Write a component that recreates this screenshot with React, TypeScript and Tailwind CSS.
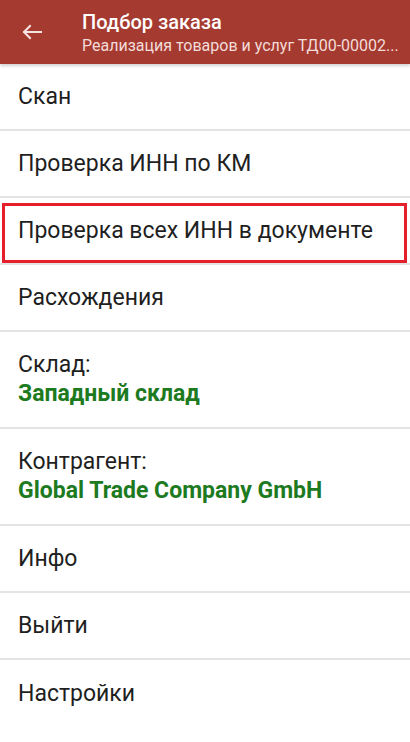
import React from 'react';

type Row = {
  label: string;
  value?: string;
  highlighted?: boolean;
};

const rows: Row[] = [
  { label: 'Скан' },
  { label: 'Проверка ИНН по КМ' },
  { label: 'Проверка всех ИНН в документе', highlighted: true },
  { label: 'Расхождения' },
  { label: 'Склад:', value: 'Западный склад' },
  { label: 'Контрагент:', value: 'Global Trade Company GmbH' },
  { label: 'Инфо' },
  { label: 'Выйти' },
  { label: 'Настройки' },
];

const App: React.FC = () => {
  return (
    <div
      className="w-[410px] h-[742px] bg-white overflow-hidden flex flex-col"
      style={{ fontFamily: 'Roboto, "Noto Sans", sans-serif' }}
    >
      {/* App bar */}
      <header className="h-[64px] shrink-0 bg-[#a53a30] flex items-center shadow-[0_2px_3px_rgba(0,0,0,0.18)] relative z-10">
        <div className="w-[62px] h-full flex items-center justify-center pl-[2px]">
          <svg width="22" height="16" viewBox="0 0 22 16" fill="none">
            <path
              d="M20 8H3M9 2L3 8L9 14"
              stroke="#f6e4e2"
              strokeWidth="2"
              strokeLinecap="square"
            />
          </svg>
        </div>
        <div className="flex flex-col min-w-0 pl-[20px] pr-[10px]">
          <span className="text-white text-[20px] leading-[26px] font-medium">Подбор заказа</span>
          <span className="text-[#f3dcd9] text-[16px] leading-[21px] whitespace-nowrap truncate">
            Реализация товаров и услуг ТД00-00002...
          </span>
        </div>
      </header>

      {/* Menu */}
      <div className="flex flex-col">
        {rows.map((row, idx) => (
          <div
            key={idx}
            className={
              (row.value
                ? 'relative h-[97px] px-[18px] flex flex-col justify-center'
                : 'relative h-[67px] px-[18px] flex items-center') +
              (idx < rows.length - 1 ? ' border-b-2 border-[#e4e4e4]' : '')
            }
          >
            <span className="text-[23px] leading-[29px] text-[#1f1f1f]">{row.label}</span>
            {row.value && (
              <span className="text-[23px] leading-[30px] font-bold text-[#1d7a1f]">{row.value}</span>
            )}
            {row.highlighted && (
              <div className="absolute left-[2px] right-[3px] top-[5px] bottom-[0px] border-[3px] border-[#e3202c]" />
            )}
          </div>
        ))}
      </div>
    </div>
  );
};

export default App;
